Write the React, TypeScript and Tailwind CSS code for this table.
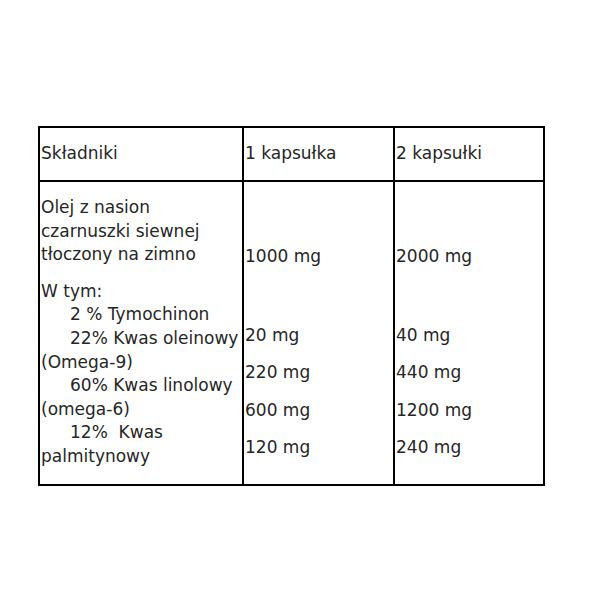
const FONT = "font-['DejaVu_Sans',Verdana,sans-serif]";

const headers = ["Składniki", "1 kapsułka", "2 kapsułki"];

const doses = [
  { one: "20 mg", two: "40 mg" },
  { one: "220 mg", two: "440 mg" },
  { one: "600 mg", two: "1200 mg" },
  { one: "120 mg", two: "240 mg" },
];

function Line({ children, indent = false }: { children: React.ReactNode; indent?: boolean }) {
  return (
    <div className={"whitespace-pre leading-[23.6px] " + (indent ? "pl-[29px]" : "")}>{children}</div>
  );
}

function DoseColumn({ main, items }: { main: string; items: string[] }) {
  return (
    <div className="flex flex-col pt-[62px] pl-px">
      <div className="leading-6">{main}</div>
      <div className="mt-[55px] flex flex-col gap-[13.3px]">
        {items.map((v) => (
          <div key={v} className="leading-6">
            {v}
          </div>
        ))}
      </div>
    </div>
  );
}

export default function App() {
  return (
    <div className={`min-h-[600px] w-[600px] bg-white pt-[126px] pl-[38px] text-[17px] text-[#262626] ${FONT}`}>
      <div className="w-[507px] border-2 border-black">
        {/* Header */}
        <div className="flex h-[54px] border-b-2 border-black">
          {headers.map((h, i) => (
            <div
              key={h}
              className={
                "flex items-center pl-px " +
                (i === 0 ? "w-[204px] border-r-2 border-black" : i === 1 ? "w-[151px] border-r-2 border-black" : "flex-1")
              }
            >
              {h}
            </div>
          ))}
        </div>

        {/* Body */}
        <div className="flex h-[302px]">
          <div className="w-[204px] border-r-2 border-black pt-[14px] pl-px">
            <Line>Olej z nasion</Line>
            <Line>czarnuszki siewnej</Line>
            <Line>tłoczony na zimno</Line>
            <div className="mt-[13px]">
              <Line>W tym:</Line>
              <Line indent>2 % Tymochinon</Line>
              <Line indent>22% Kwas oleinowy</Line>
              <Line>(Omega-9)</Line>
              <Line indent>60% Kwas linolowy</Line>
              <Line>(omega-6)</Line>
              <Line indent>12%  Kwas</Line>
              <Line>palmitynowy</Line>
            </div>
          </div>
          <div className="w-[151px] border-r-2 border-black">
            <DoseColumn main="1000 mg" items={doses.map((d) => d.one)} />
          </div>
          <div className="flex-1">
            <DoseColumn main="2000 mg" items={doses.map((d) => d.two)} />
          </div>
        </div>
      </div>
    </div>
  );
}
